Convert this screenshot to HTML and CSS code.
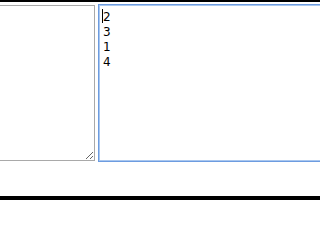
FILE: index.html
```html
<!DOCTYPE html>
<html>
<head>
<meta charset="utf-8">
<link rel="stylesheet" href="styles.css">
</head>
<body>
<div class="bar bar-top"></div>
<div class="stage">
  <textarea class="box box-left"></textarea>
  <div class="field-right">
    <textarea class="box box-right">2
3
1
4</textarea>
  </div>
</div>
<div class="bar bar-bottom"></div>
</body>
</html>
```
FILE: styles.css
```css
html, body {
  margin: 0;
  padding: 0;
  background: #ffffff;
}
body {
  display: flex;
  flex-direction: column;
  height: 200px;
  overflow: hidden;
}
.bar {
  background: #000000;
  flex: none;
}
.bar-top { height: 2px; }
.bar-bottom { height: 4px; }
.stage {
  flex: 1;
  display: flex;
  align-items: flex-start;
  padding-top: 2px;
  overflow: hidden;
}
.box {
  box-sizing: border-box;
  flex: none;
  margin: 0;
  font-family: "DejaVu Sans", Verdana, sans-serif;
  font-size: 12px;
  line-height: 15px;
  color: #000000;
  background: #ffffff;
  outline: none;
  display: block;
}
.box-left {
  width: 115px;
  height: 156px;
  margin-left: -20px;
  margin-top: 1px;
  border: 1px solid #a9a9a9;
}
.field-right {
  position: relative;
  flex: none;
  margin-left: 3px;
}
.field-right::after {
  content: "";
  position: absolute;
  left: 4px;
  top: 5px;
  width: 1px;
  height: 14px;
  background: #000000;
}
.box-right {
  width: 240px;
  height: 158px;
  border: 1px solid #6d9ce0;
  box-shadow: inset 0 0 0 1px #a9c7ef;
  padding: 5px 4px 3px 4px;
  resize: none;
}
```
